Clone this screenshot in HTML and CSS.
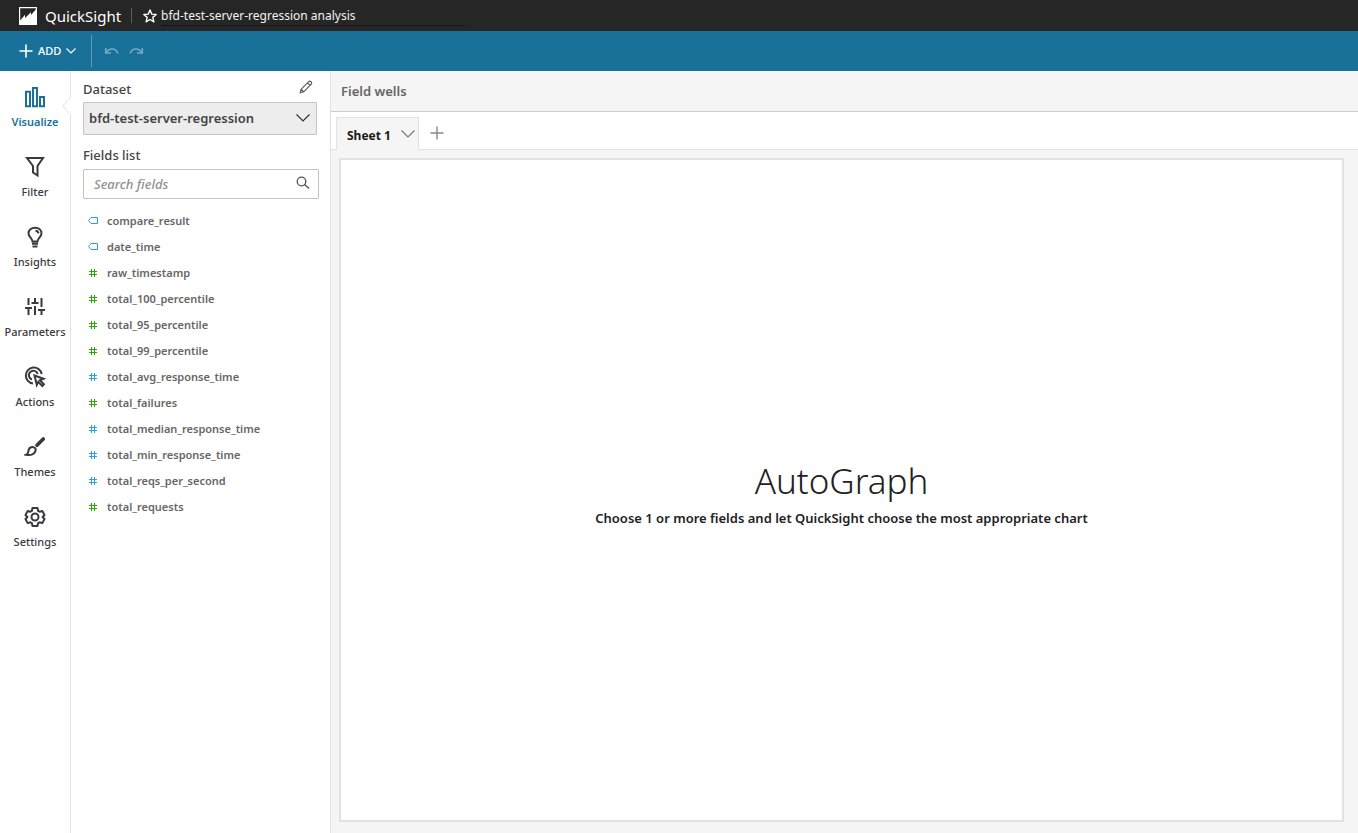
FILE: index.html
```html
<!DOCTYPE html>
<html lang="en">
<head>
<meta charset="utf-8">
<meta name="viewport" content="width=device-width, initial-scale=1">
<title>QuickSight - bfd-test-server-regression analysis</title>
<link rel="stylesheet" href="styles.css">
</head>
<body>
<svg class="symbols" width="0" height="0" aria-hidden="true">
  <symbol id="tag" viewBox="0 0 12 10"><path d="M4 1.500h6.500v6H4L1.500 4.500z" fill="none" stroke="currentColor"/></symbol>
  <symbol id="hash" viewBox="0 0 12 10"><path d="M4.500 1v8M7.500 1v8M2 3.500h8M2 6.500h8" fill="none" stroke="currentColor"/></symbol>
</svg>
<header class="topbar">
  <a class="brand" href="#">
    <svg width="18" height="18" viewBox="0 0 18 18"><path d="M0 0h18v18H0z" fill="#fff"/><path d="M1.200 1.200h15.600v1.300L12 8V5.200L6 11V7.800L1.200 13.500z" fill="#262626"/></svg>
    <span>QuickSight</span>
  </a>
  <button class="star" aria-label="Favorite"><svg width="14" height="14" viewBox="0 0 14 14"><path d="M7 1l1.800 4.100 4.400.4-3.400 2.900 1.100 4.400L7 10.500l-3.900 2.300 1.100-4.400L.8 5.500l4.400-.4z" fill="none" stroke="#fff" stroke-width="1.400" stroke-linejoin="round"/></svg></button>
  <input class="title" aria-label="Analysis name" value="bfd-test-server-regression analysis">
</header>
<div class="toolbar">
  <button class="add">
    <svg width="14" height="14" viewBox="0 0 14 14"><path d="M7 .5v13M.5 7h13" stroke="#fff" stroke-width="1.600"/></svg>
    <span>ADD</span>
    <svg width="10" height="6" viewBox="0 0 10 6"><path d="M.5.5L5 5 9.500.5" fill="none" stroke="#fff" stroke-width="1.200"/></svg>
  </button>
  <button class="history" aria-label="Undo"><svg width="16" height="8" viewBox="0 0 16 8"><path d="M1.700 1v5H7M2 5.500C5 1 11.500.5 14 6.500" fill="none" stroke="currentColor" stroke-width="1.500"/></svg></button>
  <button class="history" aria-label="Redo"><svg width="16" height="8" viewBox="0 0 16 8"><path d="M14.300 1v5H9M14 5.500C11 1 4.500.5 2 6.500" fill="none" stroke="currentColor" stroke-width="1.500"/></svg></button>
</div>
<div class="workspace">
  <nav class="rail">
    <button class="rail-item active"><svg width="22" height="22" viewBox="0 0 22 22"><path d="M2 5.800h4v14.400H2zM9 2h4v18.200H9zM16 11h4v9.200h-4z"/></svg><span>Visualize</span>
      <svg class="notch" width="9" height="18" viewBox="0 0 9 18"><path class="notch-fill" d="M9 0L1 9l8 9z"/><path class="notch-line" d="M8.500.5L1 9l7.500 8.500"/></svg></button>
    <button class="rail-item"><svg width="22" height="22" viewBox="0 0 22 22"><path d="M3 2h16l-5.500 8v9.500L9 16.500V10z"/></svg><span>Filter</span></button>
    <button class="rail-item"><svg width="22" height="22" viewBox="0 0 22 22"><path d="M8.500 15.500c0-3.500-4-4.500-4-8.300C4.500 3.800 7.300 1.700 11 1.700s6.500 2.100 6.500 5.500c0 3.800-4 4.800-4 8.300zM8 17.800h6M8.500 20.500h5M11.500 4.700c1.700.2 2.700 1.100 3 2.700"/></svg><span>Insights</span></button>
    <button class="rail-item"><svg width="22" height="22" viewBox="0 0 22 22"><path d="M4.500 2v7M1 12h7M4.500 12v7M11 2v4M7.500 7h7M11 10v9M17.500 2v9M14 14h7M17.500 14v5"/></svg><span>Parameters</span></button>
    <button class="rail-item"><svg width="22" height="22" viewBox="0 0 22 22"><path d="M9 17.500A8 8 0 1 1 17.700 8M8 13.500A4.500 4.500 0 1 1 13.700 8"/><path d="M10.500 9.500l9 3.200-3.600 1.600 4 4-1.600 1.700-4.100-4.100-1.400 3z"/></svg><span>Actions</span></button>
    <button class="rail-item"><svg width="22" height="22" viewBox="0 0 22 22"><path d="M13 9.300l6.300-6.300" stroke-width="3.600" stroke-linecap="round"/><path d="M7.200 11.200c2.400-.6 4.700.6 4.500 3-.3 3.200-4 5.600-9.500 4.600 2-.8 1.900-2 2.200-3.800.3-2 1-3.300 2.800-3.800z"/></svg><span>Themes</span></button>
    <button class="rail-item"><svg width="22" height="22" viewBox="0 0 22 22"><path stroke-linejoin="round" d="M8.500 2h5l.6 2.800 1.500.9 2.700-.8L20.500 9l-1.900 2 1.900 2-2.200 4.100-2.700-.8-1.500.9-.6 2.800h-5l-.6-2.800-1.500-.9-2.700.8L1.500 13l1.900-2-1.900-2 2.200-4.100 2.700.8 1.500-.9z"/><circle cx="11" cy="11" r="3.500"/></svg><span>Settings</span></button>
  </nav>
  <aside class="panel">
    <div class="panel-head">
      <label for="dataset">Dataset</label>
      <button class="edit" aria-label="Edit dataset"><svg width="14" height="14" viewBox="0 0 14 14"><path d="M1.200 12.800l.9-3.600L10 1.300c1-.8 3.300 1.200 2.500 2.500l-7.800 8zM8.500 2.800l2.600 2.600M2.300 9.300l2.300 2.300" fill="none" stroke="#545454" stroke-width="1.100"/></svg></button>
    </div>
    <div class="select-wrap">
      <select id="dataset"><option>bfd-test-server-regression</option></select>
      <svg class="select-arrow" width="14" height="8" viewBox="0 0 14 8"><path d="M.5.500L7 7l6.500-6.500" fill="none" stroke="#333" stroke-width="1.200"/></svg>
    </div>
    <label class="list-label" for="search">Fields list</label>
    <div class="search-wrap">
      <input id="search" type="text" placeholder="Search fields">
      <svg class="search-icon" width="14" height="14" viewBox="0 0 14 14"><circle cx="5.500" cy="5.500" r="4.300" fill="none" stroke="#545454" stroke-width="1.300"/><path d="M8.500 8.500l4.500 4" stroke="#545454" stroke-width="1.500"/></svg>
    </div>
    <ul class="fields">
      <li><svg class="blue"><use href="#tag"/></svg>compare_result</li>
      <li><svg class="blue"><use href="#tag"/></svg>date_time</li>
      <li><svg class="green"><use href="#hash"/></svg>raw_timestamp</li>
      <li><svg class="green"><use href="#hash"/></svg>total_100_percentile</li>
      <li><svg class="green"><use href="#hash"/></svg>total_95_percentile</li>
      <li><svg class="green"><use href="#hash"/></svg>total_99_percentile</li>
      <li><svg class="blue"><use href="#hash"/></svg>total_avg_response_time</li>
      <li><svg class="green"><use href="#hash"/></svg>total_failures</li>
      <li><svg class="blue"><use href="#hash"/></svg>total_median_response_time</li>
      <li><svg class="blue"><use href="#hash"/></svg>total_min_response_time</li>
      <li><svg class="blue"><use href="#hash"/></svg>total_reqs_per_second</li>
      <li><svg class="green"><use href="#hash"/></svg>total_requests</li>
    </ul>
  </aside>
  <main class="main">
    <div class="wells">Field wells</div>
    <div class="tabs">
      <button class="tab"><span>Sheet 1</span><svg width="14" height="8" viewBox="0 0 14 8"><path d="M.5.500L7 7l6.500-6.500" fill="none" stroke="#777" stroke-width="1.200"/></svg></button>
      <button class="new-tab" aria-label="Add sheet"><svg width="14" height="14" viewBox="0 0 14 14"><path d="M7 .5v13M.5 7h13" stroke="#888" stroke-width="1.400"/></svg></button>
    </div>
    <div class="canvas">
      <section class="sheet">
        <h1>AutoGraph</h1>
        <p>Choose 1 or more fields and let QuickSight choose the most appropriate chart</p>
      </section>
    </div>
  </main>
</div>
</body>
</html>
```
FILE: styles.css
```css
* { box-sizing: border-box; }
body {
  margin: 0;
  min-height: 100vh;
  display: flex;
  flex-direction: column;
  background: #fff;
  color: #444;
  font-family: "Noto Sans", "Open Sans", sans-serif;
  font-size: 12px;
  line-height: 16px;
}
button, input, select { font: inherit; color: inherit; border: 0; border-radius: 0; margin: 0; padding: 0; background: none; }
button { cursor: pointer; }
svg { display: block; flex: none; }
.symbols { position: absolute; }

.topbar { display: flex; align-items: center; height: 31px; padding-left: 19px; background: #262626; color: #fff; }
.brand { display: flex; align-items: center; gap: 8px; height: 15px; padding-right: 10px; border-right: 1px solid #5c5c5c; color: #fff; font-size: 15px; text-decoration: none; }
.star { margin: 0 4px 0 11px; }
.title { width: 304px; height: 20px; margin-top: 1px; border-bottom: 1px solid #151515; color: #f2f2f2; }

.toolbar { display: flex; align-items: center; height: 40px; background: #19719a; color: #fff; }
.add { display: flex; align-items: center; gap: 5px; height: 32px; padding: 0 15px 0 19px; border-right: 1px solid #5a9bb9; font-size: 11px; font-weight: 500; }
.history { margin-left: 12px; color: #75acc5; }
.history + .history { margin-left: 8px; }

.workspace { display: flex; flex: 1; }
.rail { width: 71px; border-right: 1px solid #e2e2e2; }
.rail-item { position: relative; display: flex; flex-direction: column; align-items: center; gap: 6px; width: 100%; height: 70px; padding-top: 15px; color: #3a3a3e; font-weight: 500; font-size: 11px; }
.rail-item svg { fill: none; stroke: currentColor; stroke-width: 2; }
.rail-item.active { color: #19719a; font-weight: 600; }
.rail-item .notch { position: absolute; right: -1px; top: 26px; stroke-width: 1; }
.notch .notch-fill { fill: #fff; stroke: none; }
.notch .notch-line { stroke: #e2e2e2; }

.panel { width: 260px; padding: 8px 12px; border-right: 1px solid #e2e2e2; font-weight: 500; font-size: 13px; }
.panel-head { display: flex; justify-content: space-between; height: 20px; line-height: 20px; }
.edit { align-self: flex-start; margin: 1px 5px 0 0; }
.select-wrap, .search-wrap { position: relative; }
.select-wrap { margin-top: 3px; }
.select-wrap select { appearance: none; width: 234px; height: 33px; padding: 0 30px 2px 5px; border: 1px solid #c4c4c4; border-radius: 1px; background: #ededed; font-weight: 600; }
.select-arrow { position: absolute; left: 213px; top: 12px; pointer-events: none; }
.list-label { display: block; margin-top: 10px; line-height: 20px; }
.search-wrap { margin-top: 4px; }
.search-wrap input { width: 236px; height: 30px; padding: 0 30px 0 10px; border: 1px solid #c4c4c4; border-radius: 1px; }
.search-wrap input::placeholder { color: #909090; font-style: italic; opacity: 1; }
.search-icon { position: absolute; left: 213px; top: 7px; }
.fields { margin: 9px 0 0; padding: 0; list-style: none; color: #666; font-size: 11px; font-weight: 600; }
.fields li { display: flex; align-items: center; gap: 8px; height: 26px; padding-left: 4px; }
.fields svg { width: 12px; height: 10px; }
.blue { color: #2b9fd8; }
.green { color: #2ca600; }

.main { display: flex; flex: 1; flex-direction: column; min-width: 0; }
.wells { height: 41px; padding-left: 10px; border-bottom: 1px solid #ccc; background: #f5f5f5; color: #666; font-size: 13px; font-weight: 600; line-height: 40px; }
.tabs { display: flex; align-items: flex-end; height: 38px; padding-left: 5px; box-shadow: inset 0 -1px #e2e2e2; }
.tab { display: flex; align-items: center; gap: 10px; height: 33px; padding: 0 3px 0 10px; border: 1px solid #e2e2e2; border-bottom: 0; background: #f5f5f5; color: #1a1a1a; font-size: 12px; font-weight: 700; }
.tab span { padding-top: 4px; }
.new-tab { align-self: center; height: 14px; margin: 4px 0 0 11px; }
.canvas { display: flex; flex: 1; padding: 8px 14px 11px 8px; background: #f5f5f5; }
.sheet { display: flex; flex: 1; flex-direction: column; align-items: center; justify-content: center; padding-top: 4px; border: 2px solid #e2e2e2; background: #fff; color: #222; text-align: center; }
.sheet h1 { margin: 0; font-size: 35px; font-weight: 300; line-height: 48px; }
.sheet p { margin: 3px 0 0; font-size: 13px; font-weight: 600; line-height: 20px; }
```
